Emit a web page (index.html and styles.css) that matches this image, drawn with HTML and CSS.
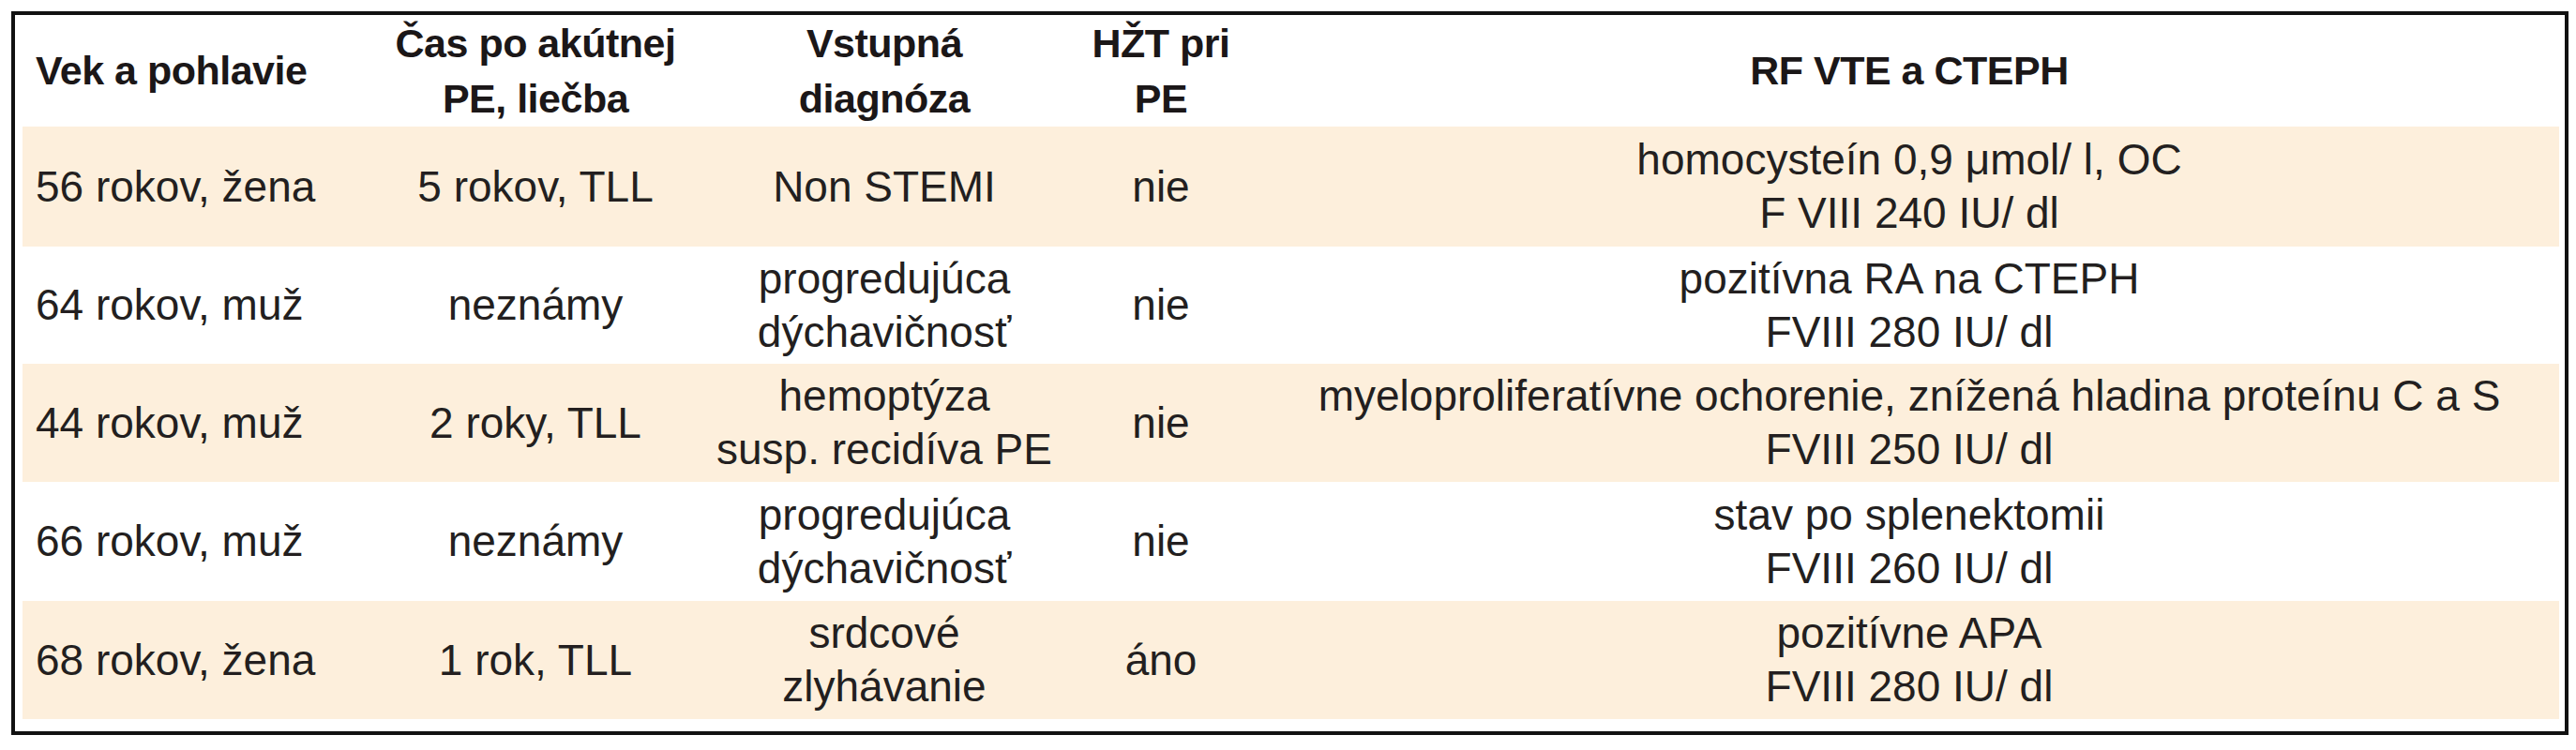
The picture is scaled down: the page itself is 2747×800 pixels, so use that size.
FILE: index.html
```html
<!DOCTYPE html>
<html lang="sk">
<head>
<meta charset="utf-8">
<title>Tabuľka</title>
<link rel="stylesheet" href="styles.css">
</head>
<body>
<div class="frame">
  <table class="data">
    <colgroup>
      <col class="c1"><col class="c2"><col class="c3"><col class="c4"><col class="c5">
    </colgroup>
    <thead>
      <tr class="head">
        <th class="left">Vek a pohlavie</th>
        <th>Čas po akútnej<br>PE, liečba</th>
        <th>Vstupná<br>diagnóza</th>
        <th>HŽT pri<br>PE</th>
        <th>RF VTE a CTEPH</th>
      </tr>
    </thead>
    <tbody>
      <tr class="band r1">
        <td class="left">56 rokov, žena</td>
        <td>5 rokov, TLL</td>
        <td>Non STEMI</td>
        <td>nie</td>
        <td>homocysteín 0,9 μmol/ l, OC<br>F VIII 240 IU/ dl</td>
      </tr>
      <tr class="plain r2">
        <td class="left">64 rokov, muž</td>
        <td>neznámy</td>
        <td>progredujúca<br>dýchavičnosť</td>
        <td>nie</td>
        <td>pozitívna RA na CTEPH<br>FVIII 280 IU/ dl</td>
      </tr>
      <tr class="band r3">
        <td class="left">44 rokov, muž</td>
        <td>2 roky, TLL</td>
        <td>hemoptýza<br>susp. recidíva PE</td>
        <td>nie</td>
        <td>myeloproliferatívne ochorenie, znížená hladina proteínu C a S<br>FVIII 250 IU/ dl</td>
      </tr>
      <tr class="plain r4">
        <td class="left">66 rokov, muž</td>
        <td>neznámy</td>
        <td>progredujúca<br>dýchavičnosť</td>
        <td>nie</td>
        <td>stav po splenektomii<br>FVIII 260 IU/ dl</td>
      </tr>
      <tr class="band r5">
        <td class="left">68 rokov, žena</td>
        <td>1 rok, TLL</td>
        <td>srdcové<br>zlyhávanie</td>
        <td>áno</td>
        <td>pozitívne APA<br>FVIII 280 IU/ dl</td>
      </tr>
    </tbody>
  </table>
</div>
</body>
</html>
```

FILE: styles.css
```css
html, body {
  margin: 0;
  padding: 0;
  background: #ffffff;
}

body {
  font-family: "Liberation Sans", Arial, sans-serif;
  color: #231f20;
}

.frame {
  margin: 12px 0 0 12px;
  width: 2727px;
  box-sizing: border-box;
  border: 4px solid #111111;
  padding: 0 6px 13px 8px;
}

.data {
  width: 2705px;
  border-collapse: collapse;
  table-layout: fixed;
}

.c1 { width: 365px; }
.c2 { width: 364px; }
.c3 { width: 380px; }
.c4 { width: 210px; }
.c5 { width: 1386px; }

.data th,
.data td {
  padding: 0;
  text-align: center;
  vertical-align: middle;
}

.data th {
  font-weight: bold;
  font-size: 43px;
  line-height: 59px;
  letter-spacing: -0.5px;
  color: #1b1718;
}

.data td {
  font-size: 46px;
  line-height: 57px;
  letter-spacing: 0;
}

.data .left {
  text-align: left;
  padding-left: 14px;
}

.head { height: 119px; }
.r1 { height: 128px; }
.r2 { height: 125px; }
.r3 { height: 126px; }
.r4 { height: 127px; }
.r5 { height: 126px; }

.band { background: #fdefdc; }
.plain { background: #ffffff; }
```
